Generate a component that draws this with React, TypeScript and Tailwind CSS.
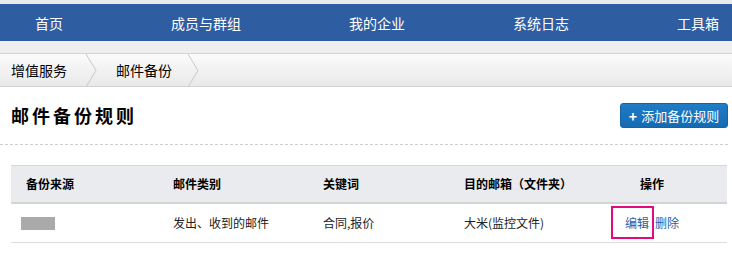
import React from "react";

const font = { fontFamily: '"Noto Sans CJK SC", "Noto Sans", sans-serif' };

function Chevron() {
  return (
    <svg width="12" height="33" viewBox="0 0 12 33" className="block">
      <polyline points="1,0 11,16.5 1,33" fill="none" stroke="#c8c8c8" strokeWidth="1" />
    </svg>
  );
}

export default function App() {
  const nav = ["首页", "成员与群组", "我的企业", "系统日志", "工具箱"];
  return (
    <div className="w-[732px] h-[269px] bg-white overflow-hidden" style={font}>
      <div className="h-[4px] bg-[#e9e9e9]" />
      <div className="h-[37px] bg-[#2f5da1] flex items-center pl-[35px] gap-[108px] text-white text-[14px] leading-none">
        {nav.map((n) => (
          <span key={n} className="whitespace-nowrap">{n}</span>
        ))}
      </div>
      <div className="h-[12px] bg-[#eeeeee]" />
      <div className="h-[34px] border-y border-[#d3d3d3] bg-gradient-to-b from-[#fbfbfb] to-[#e9e9e9] flex items-center text-[14px] text-black leading-none">
        <span className="pl-[11px] pr-[18px]">增值服务</span>
        <Chevron />
        <span className="pl-[19px] pr-[15px]">邮件备份</span>
        <Chevron />
      </div>
      <div className="flex items-center justify-between pl-[11px] pr-[4px] pt-[16px]">
        <h1 className="text-[18px] font-bold tracking-[3px] leading-[25px] text-black">邮件备份规则</h1>
        <button className="h-[25px] w-[108px] rounded-[3px] border border-[#1563a6] bg-gradient-to-b from-[#1f7cc6] to-[#146bb2] text-white text-[13px] leading-none flex items-center justify-center gap-[4px]">
          <span className="font-bold text-[14px]">+</span>
          <span>添加备份规则</span>
        </button>
      </div>
      <div className="mt-[16px] mr-[4px] border-t border-dashed border-[#cfcfcf]" />
      <div className="mt-[20px] ml-[11px] mr-[5px] text-[12px]">
        <div className="grid grid-cols-[147px_150px_141px_128px_150px] h-[39px] items-center bg-[#e9ebee] border-t border-[#d6d6d6] border-b-2 border-b-[#d4d4d4] font-bold text-black">
          <div className="pl-[15px]">备份来源</div>
          <div className="pl-[15px]">邮件类别</div>
          <div className="pl-[15px]">关键词</div>
          <div className="pl-[15px]">目的邮箱（文件夹）</div>
          <div className="text-center">操作</div>
        </div>
        <div className="grid grid-cols-[147px_150px_141px_128px_150px] h-[39px] items-center border-b border-[#dcdcdc] text-[#222]">
          <div className="pl-[10px]">
            <div className="w-[34px] h-[13px] bg-[#aaaaaa]" />
          </div>
          <div className="pl-[15px]">发出、收到的邮件</div>
          <div className="pl-[15px]">合同,报价</div>
          <div className="pl-[15px]">大米(监控文件)</div>
          <div className="flex justify-center text-[#2a5ea8]">
            <span className="relative">
              编辑
              <span className="absolute left-[-14px] right-[-5px] top-[-8px] bottom-[-7px] border-2 border-[#e5097f]" />
            </span>
            <span className="ml-[6px]">删除</span>
          </div>
        </div>
      </div>
    </div>
  );
}
